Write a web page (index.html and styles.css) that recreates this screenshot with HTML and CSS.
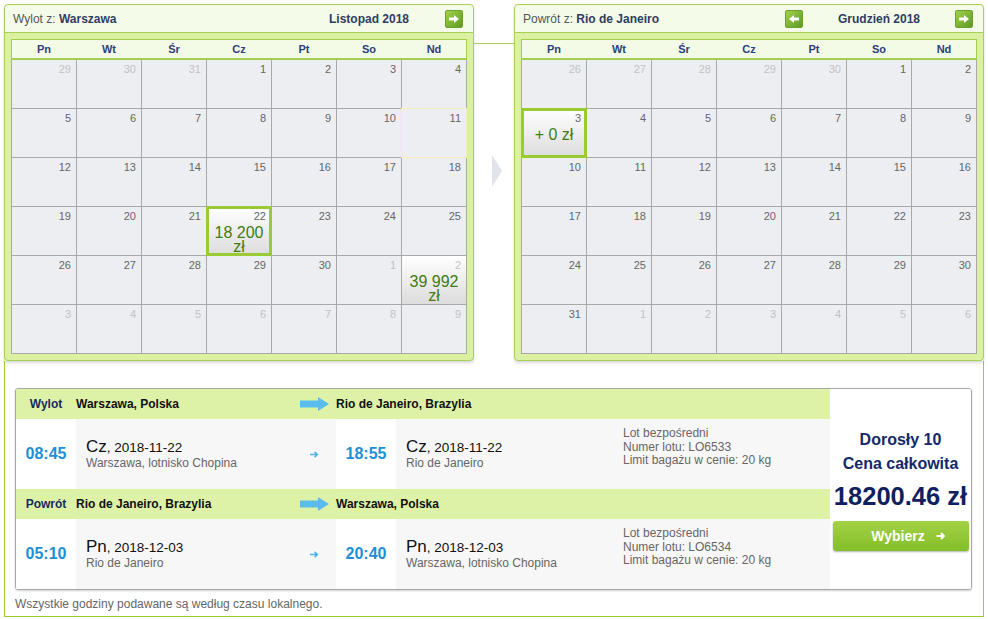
FILE: index.html
```html
<!DOCTYPE html>
<html lang="pl">
<head>
    <meta charset="UTF-8">
    <title>Wybór lotu</title>
    <link rel="stylesheet" href="styles.css">
</head>
<body>
<div class="page">
    <div class="cals">
        <div class="panel">
            <div class="panel-head">
                <div class="panel-title">Wylot z: <b>Warszawa</b></div>
                <div class="month-nav">
                    <span class="nav-btn nav-none"></span>
                    <span class="month">Listopad 2018</span>
                    <span class="nav-btn"><svg width="10" height="8" viewBox="0 0 10 8"><path d="M0 2.4h5V0l5 4-5 4V5.6H0z" fill="#fff"/></svg></span>
                </div>
            </div>
            <div class="panel-body">
                <div class="dow"><span>Pn</span><span>Wt</span><span>Śr</span><span>Cz</span><span>Pt</span><span>So</span><span>Nd</span></div>
                <div class="days">
                    <div class="d o"><span class="n">29</span></div>
                    <div class="d o"><span class="n">30</span></div>
                    <div class="d o"><span class="n">31</span></div>
                    <div class="d"><span class="n">1</span></div>
                    <div class="d"><span class="n">2</span></div>
                    <div class="d"><span class="n">3</span></div>
                    <div class="d"><span class="n">4</span></div>

                    <div class="d"><span class="n">5</span></div>
                    <div class="d"><span class="n">6</span></div>
                    <div class="d"><span class="n">7</span></div>
                    <div class="d"><span class="n">8</span></div>
                    <div class="d"><span class="n">9</span></div>
                    <div class="d"><span class="n">10</span></div>
                    <div class="d today"><span class="n">11</span></div>

                    <div class="d"><span class="n">12</span></div>
                    <div class="d"><span class="n">13</span></div>
                    <div class="d"><span class="n">14</span></div>
                    <div class="d"><span class="n">15</span></div>
                    <div class="d"><span class="n">16</span></div>
                    <div class="d"><span class="n">17</span></div>
                    <div class="d"><span class="n">18</span></div>

                    <div class="d"><span class="n">19</span></div>
                    <div class="d"><span class="n">20</span></div>
                    <div class="d"><span class="n">21</span></div>
                    <div class="d priced sel"><span class="n">22</span><span class="price">18 200 zł</span></div>
                    <div class="d"><span class="n">23</span></div>
                    <div class="d"><span class="n">24</span></div>
                    <div class="d"><span class="n">25</span></div>

                    <div class="d"><span class="n">26</span></div>
                    <div class="d"><span class="n">27</span></div>
                    <div class="d"><span class="n">28</span></div>
                    <div class="d"><span class="n">29</span></div>
                    <div class="d"><span class="n">30</span></div>
                    <div class="d o"><span class="n">1</span></div>
                    <div class="d o priced"><span class="n">2</span><span class="price">39 992 zł</span></div>

                    <div class="d o"><span class="n">3</span></div>
                    <div class="d o"><span class="n">4</span></div>
                    <div class="d o"><span class="n">5</span></div>
                    <div class="d o"><span class="n">6</span></div>
                    <div class="d o"><span class="n">7</span></div>
                    <div class="d o"><span class="n">8</span></div>
                    <div class="d o"><span class="n">9</span></div>
                </div>
            </div>
        </div>

        <div class="link">
            <div class="link-line"></div>
            <div class="chevron"></div>
        </div>

        <div class="panel">
            <div class="panel-head">
                <div class="panel-title">Powrót z: <b>Rio de Janeiro</b></div>
                <div class="month-nav">
                    <span class="nav-btn"><svg width="10" height="8" viewBox="0 0 10 8"><path d="M10 2.4H5V0L0 4l5 4V5.6h5z" fill="#fff"/></svg></span>
                    <span class="month">Grudzień 2018</span>
                    <span class="nav-btn"><svg width="10" height="8" viewBox="0 0 10 8"><path d="M0 2.4h5V0l5 4-5 4V5.6H0z" fill="#fff"/></svg></span>
                </div>
            </div>
            <div class="panel-body">
                <div class="dow"><span>Pn</span><span>Wt</span><span>Śr</span><span>Cz</span><span>Pt</span><span>So</span><span>Nd</span></div>
                <div class="days">
                    <div class="d o"><span class="n">26</span></div>
                    <div class="d o"><span class="n">27</span></div>
                    <div class="d o"><span class="n">28</span></div>
                    <div class="d o"><span class="n">29</span></div>
                    <div class="d o"><span class="n">30</span></div>
                    <div class="d"><span class="n">1</span></div>
                    <div class="d"><span class="n">2</span></div>

                    <div class="d priced sel"><span class="n">3</span><span class="price">+ 0 zł</span></div>
                    <div class="d"><span class="n">4</span></div>
                    <div class="d"><span class="n">5</span></div>
                    <div class="d"><span class="n">6</span></div>
                    <div class="d"><span class="n">7</span></div>
                    <div class="d"><span class="n">8</span></div>
                    <div class="d"><span class="n">9</span></div>

                    <div class="d"><span class="n">10</span></div>
                    <div class="d"><span class="n">11</span></div>
                    <div class="d"><span class="n">12</span></div>
                    <div class="d"><span class="n">13</span></div>
                    <div class="d"><span class="n">14</span></div>
                    <div class="d"><span class="n">15</span></div>
                    <div class="d"><span class="n">16</span></div>

                    <div class="d"><span class="n">17</span></div>
                    <div class="d"><span class="n">18</span></div>
                    <div class="d"><span class="n">19</span></div>
                    <div class="d"><span class="n">20</span></div>
                    <div class="d"><span class="n">21</span></div>
                    <div class="d"><span class="n">22</span></div>
                    <div class="d"><span class="n">23</span></div>

                    <div class="d"><span class="n">24</span></div>
                    <div class="d"><span class="n">25</span></div>
                    <div class="d"><span class="n">26</span></div>
                    <div class="d"><span class="n">27</span></div>
                    <div class="d"><span class="n">28</span></div>
                    <div class="d"><span class="n">29</span></div>
                    <div class="d"><span class="n">30</span></div>

                    <div class="d"><span class="n">31</span></div>
                    <div class="d o"><span class="n">1</span></div>
                    <div class="d o"><span class="n">2</span></div>
                    <div class="d o"><span class="n">3</span></div>
                    <div class="d o"><span class="n">4</span></div>
                    <div class="d o"><span class="n">5</span></div>
                    <div class="d o"><span class="n">6</span></div>
                </div>
            </div>
        </div>
    </div>

    <div class="summary">
        <div class="flights">
            <div class="legs">
                <div class="leg-head">
                    <span class="leg-label">Wylot</span>
                    <span class="city">Warszawa, Polska</span>
                    <span class="big-arrow"><svg width="29" height="14" viewBox="0 0 29 14"><path d="M0 3.5h18V0l11 7-11 7v-3.5H0z" fill="#5bbcee"/></svg></span>
                    <span class="city">Rio de Janeiro, Brazylia</span>
                </div>
                <div class="leg-row">
                    <span class="time">08:45</span>
                    <div class="when">
                        <div class="date"><span class="wd">Cz</span>, 2018-11-22</div>
                        <div class="place">Warszawa, lotnisko Chopina</div>
                    </div>
                    <span class="small-arrow"><svg width="9" height="7" viewBox="0 0 9 7"><path d="M0 3.5h7.2M4.6 0.9l2.7 2.6-2.7 2.6" stroke="#4db3ea" stroke-width="1.6" fill="none"/></svg></span>
                    <span class="time">18:55</span>
                    <div class="when">
                        <div class="date"><span class="wd">Cz</span>, 2018-11-22</div>
                        <div class="place">Rio de Janeiro</div>
                    </div>
                    <div class="info">
                        Lot bezpośredni<br>
                        Numer lotu: LO6533<br>
                        Limit bagażu w cenie: 20 kg
                    </div>
                </div>
                <div class="leg-head">
                    <span class="leg-label">Powrót</span>
                    <span class="city">Rio de Janeiro, Brazylia</span>
                    <span class="big-arrow"><svg width="29" height="14" viewBox="0 0 29 14"><path d="M0 3.5h18V0l11 7-11 7v-3.5H0z" fill="#5bbcee"/></svg></span>
                    <span class="city">Warszawa, Polska</span>
                </div>
                <div class="leg-row">
                    <span class="time">05:10</span>
                    <div class="when">
                        <div class="date"><span class="wd">Pn</span>, 2018-12-03</div>
                        <div class="place">Rio de Janeiro</div>
                    </div>
                    <span class="small-arrow"><svg width="9" height="7" viewBox="0 0 9 7"><path d="M0 3.5h7.2M4.6 0.9l2.7 2.6-2.7 2.6" stroke="#4db3ea" stroke-width="1.6" fill="none"/></svg></span>
                    <span class="time">20:40</span>
                    <div class="when">
                        <div class="date"><span class="wd">Pn</span>, 2018-12-03</div>
                        <div class="place">Warszawa, lotnisko Chopina</div>
                    </div>
                    <div class="info">
                        Lot bezpośredni<br>
                        Numer lotu: LO6534<br>
                        Limit bagażu w cenie: 20 kg
                    </div>
                </div>
            </div>
            <div class="price-box">
                <div class="pax">Dorosły 10</div>
                <div class="pax">Cena całkowita</div>
                <div class="total">18200.46 zł</div>
                <div class="select-btn">Wybierz <svg width="10" height="8" viewBox="0 0 10 8"><path d="M0.5 4h7.5M5 1l3 3-3 3" stroke="#fff" stroke-width="1.8" fill="none"/></svg></div>
            </div>
        </div>
        <p class="note">Wszystkie godziny podawane są według czasu lokalnego.</p>
    </div>
</div>
</body>
</html>
```

FILE: styles.css
```css
body {
    margin: 0;
    font-family: "Liberation Sans", Arial, sans-serif;
    font-size: 12px;
    color: #333;
    background-color: #fff;
}
.page {
    padding: 4px 4px 0 4px;
}
.cals {
    display: flex;
}
.panel {
    width: 468px;
    border: 1px solid #a9cf5b;
    border-radius: 4px;
    background-color: #dcf0a2;
    box-shadow: 0 2px 3px rgba(0, 0, 0, 0.15);
}
.panel-head {
    height: 27px;
    display: flex;
    align-items: center;
    padding: 0 10px 0 8px;
    background-color: #f4fbe8;
    border-bottom: 1px solid #a9cf5b;
    border-radius: 4px 4px 0 0;
}
.panel-title {
    flex: 1;
    color: #555;
}
.panel-title b {
    color: #2f3d63;
}
.month-nav {
    display: flex;
    align-items: center;
}
.month {
    width: 152px;
    text-align: center;
    font-weight: bold;
    color: #2f3d63;
}
.nav-btn {
    width: 16px;
    height: 16px;
    display: flex;
    align-items: center;
    justify-content: center;
    border: 1px solid #6c9f2c;
    border-radius: 2px;
    background: linear-gradient(135deg, #a2d04c, #5d9b22);
}
.nav-none {
    visibility: hidden;
}
.panel-body {
    padding: 6px;
}
.dow {
    display: grid;
    grid-template-columns: repeat(7, 64px);
    column-gap: 1px;
    height: 18px;
    align-items: center;
    border: 1px solid #a5cd4f;
    border-bottom-width: 2px;
    background-color: #f3fae5;
    font-size: 11px;
    font-weight: bold;
    color: #2c3e80;
    text-align: center;
}
.days {
    display: grid;
    grid-template-columns: repeat(7, 64px);
    grid-auto-rows: 48px;
    gap: 1px;
    padding: 0 1px 1px 1px;
    background-color: #a9a9a9;
}
.d {
    background-color: #eceef1;
}
.n {
    display: block;
    text-align: right;
    padding: 3px 5px 0 0;
    font-size: 11px;
    line-height: 13px;
    color: #666;
}
.o .n {
    color: #c2c2c2;
}
.today {
    outline: 1px solid #f7edb4;
}
.priced {
    background: linear-gradient(#fff, #dcdcdc);
}
.sel {
    outline: 1px solid #99cc33;
    box-shadow: inset 0 0 0 2px #99cc33;
}
.price {
    display: block;
    margin-top: 3px;
    text-align: center;
    font-size: 16px;
    line-height: 14px;
    color: #3f7d12;
}
.link {
    width: 40px;
}
.link-line {
    height: 1px;
    margin-top: 39px;
    background-color: #a9cf5b;
}
.chevron {
    width: 0;
    height: 0;
    margin: 111px 0 0 18px;
    border-left: 10px solid #dfe4ea;
    border-top: 16px solid transparent;
    border-bottom: 16px solid transparent;
}
.summary {
    padding: 27px 11px 5px 10px;
    border: 1px solid #9acd32;
    border-top: none;
}
.flights {
    display: flex;
    border: 1px solid #a8a8a8;
    border-radius: 3px;
    box-shadow: 0 1px 2px rgba(0, 0, 0, 0.2);
    overflow: hidden;
}
.legs {
    width: 814px;
}
.leg-head {
    display: grid;
    grid-template-columns: 60px 224px 36px 494px;
    height: 30px;
    align-items: center;
    background-color: #ddf2a6;
    font-weight: bold;
    color: #111;
}
.leg-label {
    text-align: center;
    color: #1a2a5e;
}
.big-arrow svg {
    display: block;
}
.leg-row {
    display: grid;
    grid-template-columns: 60px 224px 36px 60px 217px 217px;
    height: 70px;
    background-color: #f7f7f7;
}
.time {
    display: flex;
    align-items: center;
    justify-content: center;
    background-color: #fff;
    font-size: 16px;
    font-weight: bold;
    color: #1e8fd6;
}
.when {
    display: flex;
    flex-direction: column;
    justify-content: center;
    padding-left: 10px;
}
.date {
    font-size: 13.5px;
    color: #111;
    line-height: 17px;
}
.wd {
    font-size: 17px;
}
.place {
    color: #666;
    line-height: 14px;
}
.small-arrow {
    display: flex;
    align-items: center;
    justify-content: center;
    padding-right: 8px;
}
.info {
    padding: 8px 10px 0 10px;
    line-height: 13.5px;
    color: #666;
}
.price-box {
    flex: 1;
    background-color: #fff;
    text-align: center;
    padding-top: 39px;
    color: #13296b;
}
.pax {
    font-size: 16px;
    font-weight: bold;
    line-height: 24px;
}
.total {
    margin-top: 5px;
    font-size: 25.5px;
    font-weight: bold;
    line-height: 30px;
    color: #0e2060;
}
.select-btn {
    width: 136px;
    height: 30px;
    margin: 10px auto 0 auto;
    box-sizing: border-box;
    padding-left: 16px;
    display: flex;
    align-items: center;
    justify-content: center;
    gap: 11px;
    border-radius: 3px;
    background: linear-gradient(#a4d245, #83be2a);
    box-shadow: 0 1px 2px rgba(0, 0, 0, 0.3);
    color: #fff;
    font-size: 14px;
    font-weight: bold;
}
.note {
    margin: 7px 0 0 0;
    line-height: 14px;
    color: #666;
}
```
